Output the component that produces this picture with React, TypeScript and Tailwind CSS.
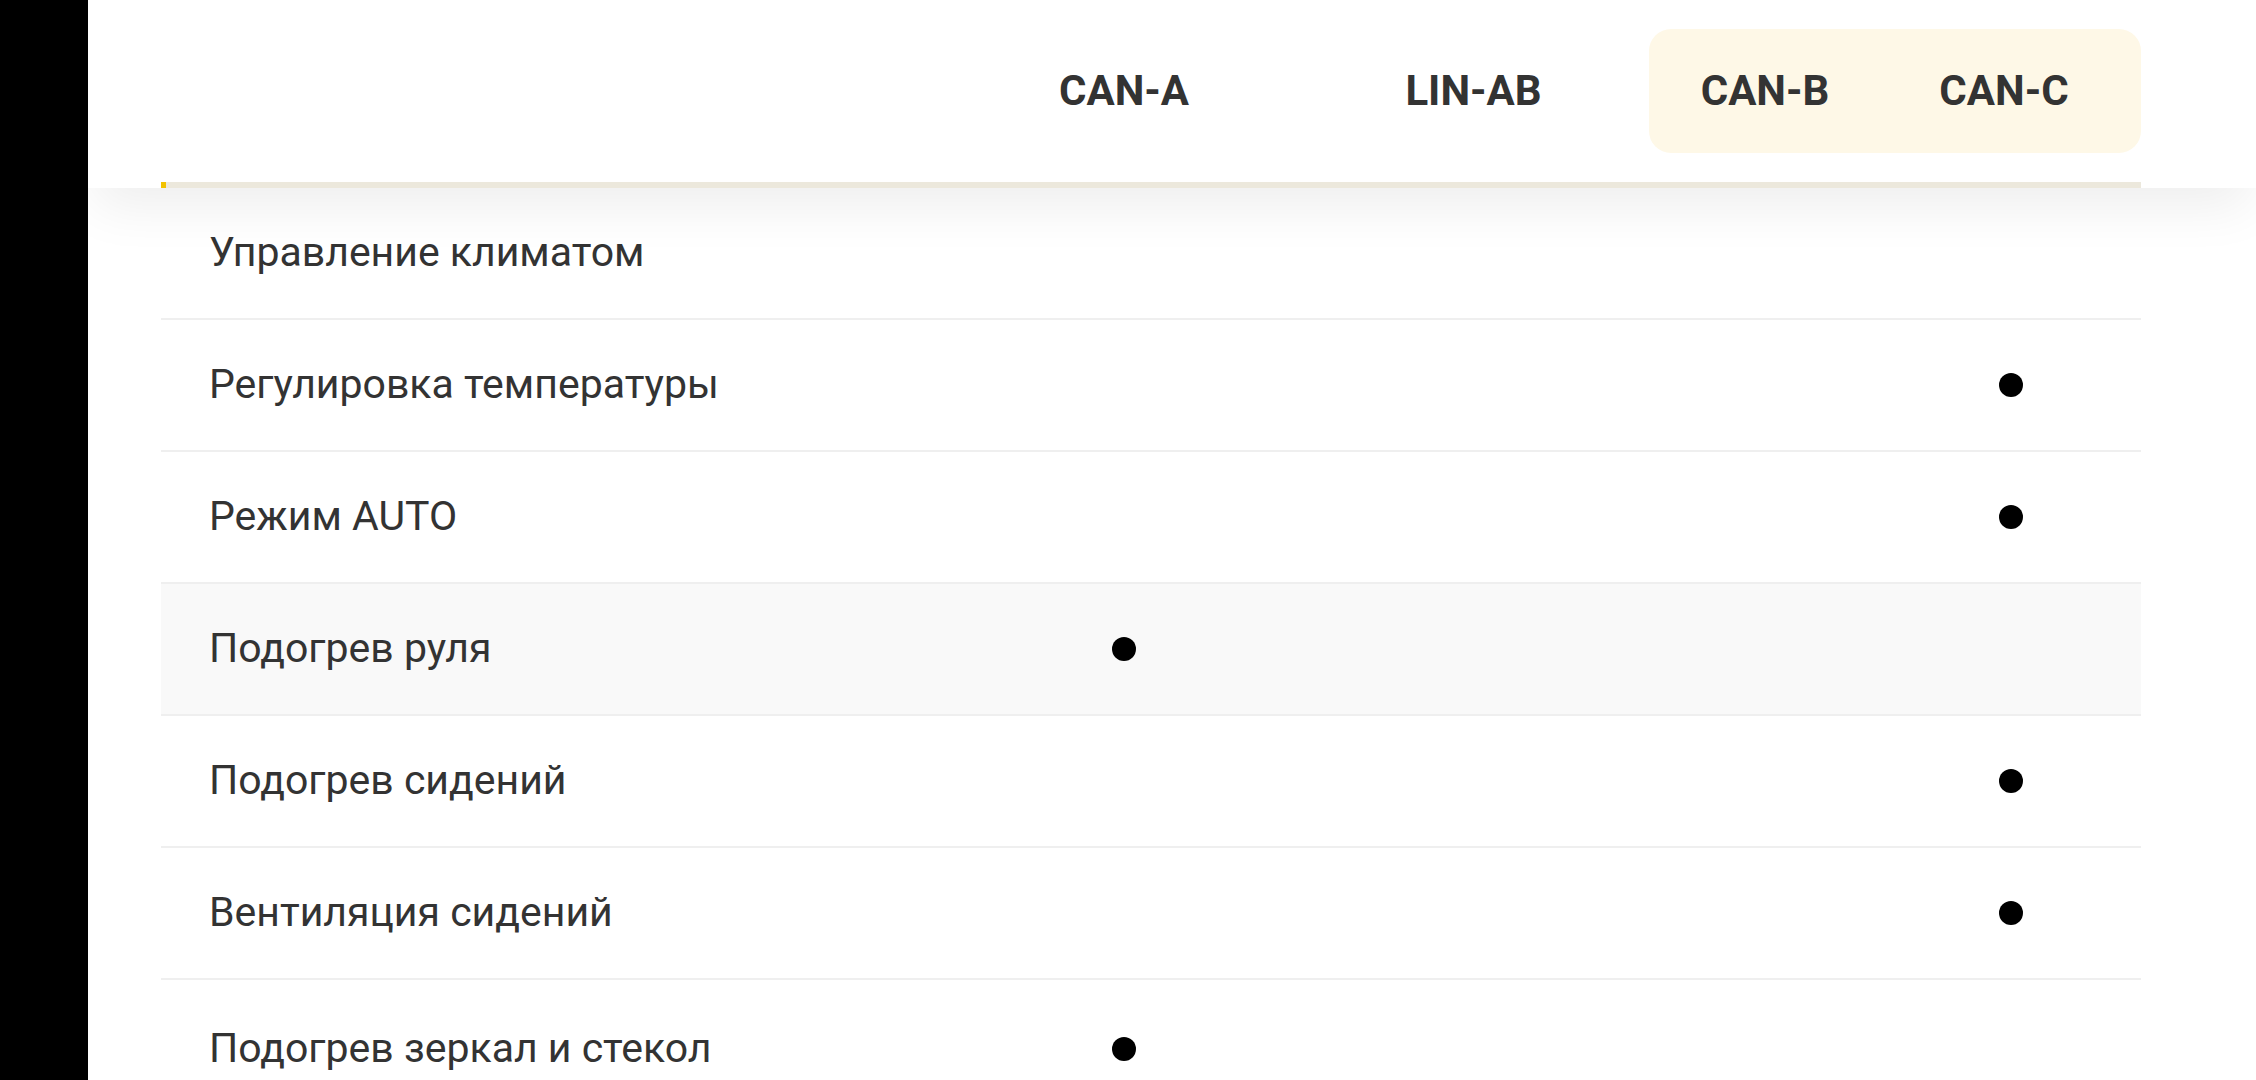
const columns = ['CAN-A', 'LIN-AB', 'CAN-B', 'CAN-C'];

type Row = { label: string; marks: boolean[]; shaded?: boolean; tall?: boolean };

const rows: Row[] = [
    { label: 'Управление климатом', marks: [false, false, false, false] },
    { label: 'Регулировка температуры', marks: [false, false, false, true] },
    { label: 'Режим AUTO', marks: [false, false, false, true] },
    { label: 'Подогрев руля', marks: [true, false, false, false], shaded: true },
    { label: 'Подогрев сидений', marks: [false, false, false, true] },
    { label: 'Вентиляция сидений', marks: [false, false, false, true] },
    { label: 'Подогрев зеркал и стекол', marks: [true, false, false, false], tall: true },
];

function Dot() {
    return <span className="block w-[24px] h-[24px] rounded-full bg-black" />;
}

function FeatureRow({ row }: { row: Row }) {
    return (
        <div
            className={`grid grid-cols-[789px_348px_351px_232px_260px] shrink-0 border-b-2 border-[#efefef] items-center ${row.tall ? 'h-[140px]' : 'h-[132px]'} ${row.shaded ? 'bg-[#f9f9f9]' : 'bg-white'}`}
        >
            <div className="pl-[48px] text-[41px] text-[#333333]">{row.label}</div>
            {row.marks.map((on, i) => (
                <div key={i} className="flex justify-center">
                    {on && <Dot />}
                </div>
            ))}
        </div>
    );
}

export default function App() {
    return (
        <div className="flex w-[2256px] h-[1080px] overflow-hidden bg-white font-['Roboto',sans-serif]">
            <aside className="w-[88px] shrink-0 bg-black" />
            <main className="flex-1 flex flex-col">
                {/* sticky table header */}
                <header className="relative z-10 bg-white shadow-[0_24px_50px_-6px_rgba(0,0,0,0.07)] pl-[73px] pr-[115px]">
                    <div className="grid grid-cols-[789px_348px_351px_232px_260px] h-[182px] items-center">
                        <div />
                        <div className="pb-[2px] text-center text-[42px] font-bold text-[#333333]">{columns[0]}</div>
                        <div className="pb-[2px] text-center text-[42px] font-bold text-[#333333]">{columns[1]}</div>
                        <div className="col-span-2 grid grid-cols-[232px_260px] items-center h-[124px] rounded-[22px] bg-[#fef8e7]">
                            <div className="pb-[2px] text-center text-[42px] font-bold text-[#333333]">{columns[2]}</div>
                            <div className="pb-[2px] text-center pr-[14px] text-[42px] font-bold text-[#333333]">{columns[3]}</div>
                        </div>
                    </div>
                    <div className="flex h-[6px]">
                        <div className="w-[5px] bg-[#f2c200]" />
                        <div className="flex-1 bg-[#ece8dc]" />
                    </div>
                </header>
                <div className="flex flex-col pl-[73px] pr-[115px]">
                    {rows.map((row) => (
                        <FeatureRow key={row.label} row={row} />
                    ))}
                </div>
            </main>
        </div>
    );
}
